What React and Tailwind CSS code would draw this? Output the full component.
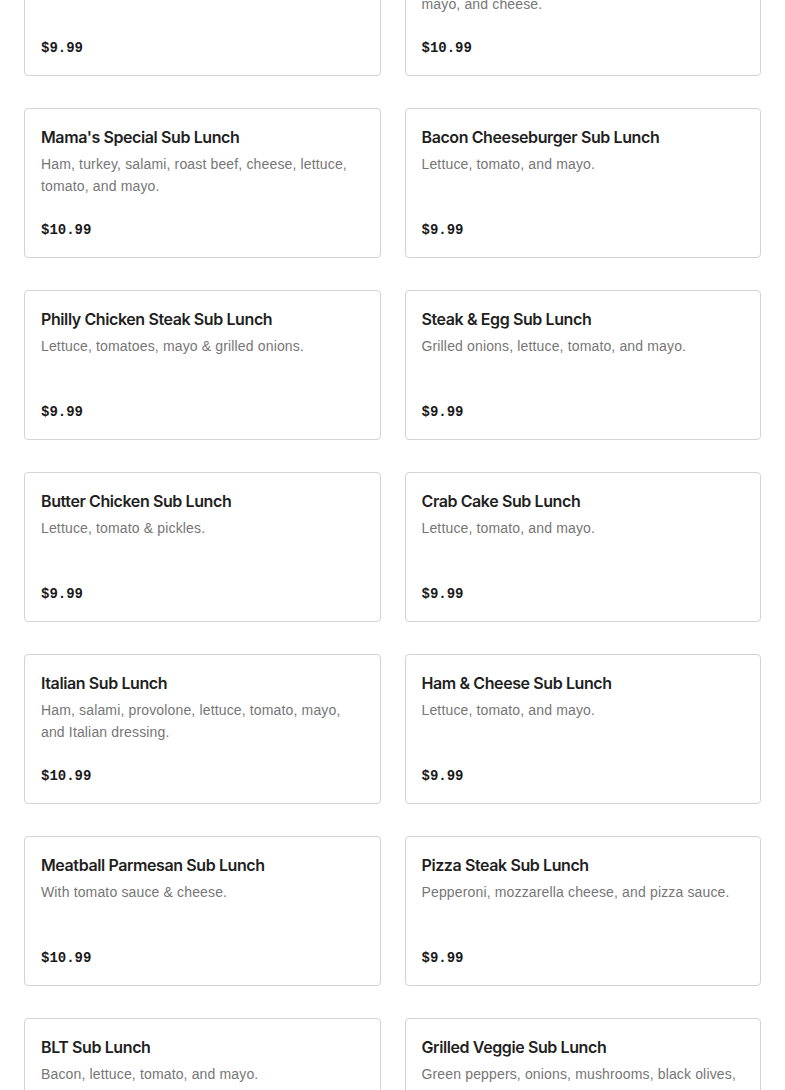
const items = [
  { name: "Cheesesteak Sub Lunch", desc: "Lettuce, tomato, and onions.", price: "$9.99" },
  { name: "Turkey Club Sub Lunch", desc: ["Turkey, bacon, lettuce, tomato, onions, pickles,", "mayo, and cheese."], price: "$10.99" },
  { name: "Mama's Special Sub Lunch", desc: "Ham, turkey, salami, roast beef, cheese, lettuce, tomato, and mayo.", price: "$10.99" },
  { name: "Bacon Cheeseburger Sub Lunch", desc: "Lettuce, tomato, and mayo.", price: "$9.99" },
  { name: "Philly Chicken Steak Sub Lunch", desc: "Lettuce, tomatoes, mayo & grilled onions.", price: "$9.99" },
  { name: "Steak & Egg Sub Lunch", desc: "Grilled onions, lettuce, tomato, and mayo.", price: "$9.99" },
  { name: "Butter Chicken Sub Lunch", desc: "Lettuce, tomato & pickles.", price: "$9.99" },
  { name: "Crab Cake Sub Lunch", desc: "Lettuce, tomato, and mayo.", price: "$9.99" },
  { name: "Italian Sub Lunch", desc: "Ham, salami, provolone, lettuce, tomato, mayo, and Italian dressing.", price: "$10.99" },
  { name: "Ham & Cheese Sub Lunch", desc: "Lettuce, tomato, and mayo.", price: "$9.99" },
  { name: "Meatball Parmesan Sub Lunch", desc: "With tomato sauce & cheese.", price: "$10.99" },
  { name: "Pizza Steak Sub Lunch", desc: "Pepperoni, mozzarella cheese, and pizza sauce.", price: "$9.99" },
  { name: "BLT Sub Lunch", desc: "Bacon, lettuce, tomato, and mayo.", price: "$9.99" },
  { name: "Grilled Veggie Sub Lunch", desc: "Green peppers, onions, mushrooms, black olives, lettuce, tomato, and mayo.", price: "$9.99" },
];

const MenuCard = ({ item }) => (
  <div className="flex min-h-[150px] flex-col rounded border border-[#d3d3d3] bg-white px-4 pt-4 pb-4">
    <h3 className="text-base leading-6 font-semibold tracking-[-0.4px] text-[#1f1f1f]" style={{ fontFamily: "'Inter', 'Liberation Sans', sans-serif" }}>
      {item.name}
    </h3>
    <p className="mt-1 text-sm leading-[22px] tracking-[0.15px] text-[#767676]">
      {Array.isArray(item.desc) ? (
        <>
          {item.desc[0]}
          <br />
          {item.desc[1]}
        </>
      ) : (
        item.desc
      )}
    </p>
    <div className="mt-auto pt-4 text-sm leading-[22px] font-bold text-[#1a1a1a]" style={{ fontFamily: "'Liberation Mono', monospace" }}>
      {item.price}
    </div>
  </div>
);

export default function App() {
  return (
    <div className="h-[1090px] overflow-hidden bg-white" style={{ fontFamily: "'Liberation Sans', Arial, sans-serif" }}>
      <div className="-mt-[74px] grid grid-cols-2 gap-x-6 gap-y-8 px-6">
        {items.map((item) => (
          <MenuCard key={item.name} item={item} />
        ))}
      </div>
    </div>
  );
}
